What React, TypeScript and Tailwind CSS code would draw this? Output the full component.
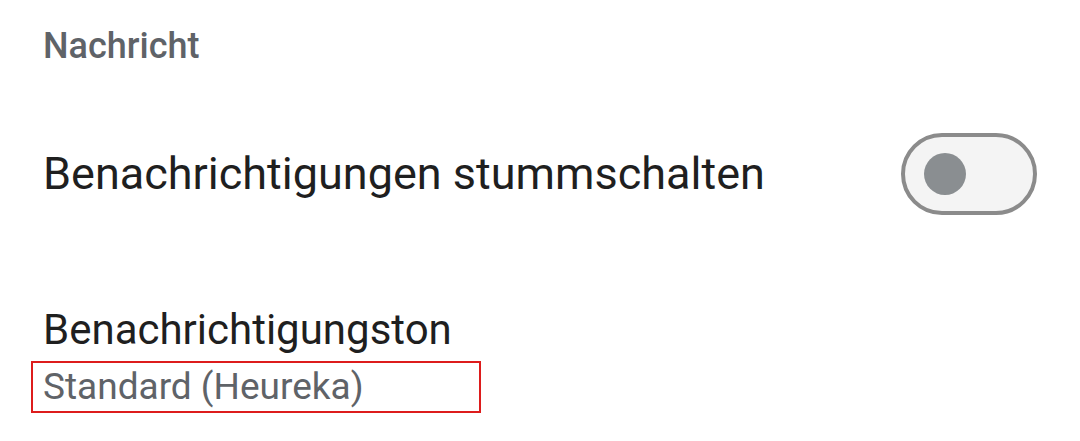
import React from 'react'

const font = { fontFamily: 'Roboto, "Noto Sans", sans-serif' }

const Toggle: React.FC = () => (
  <div className="w-[136px] h-[82px] rounded-full border-[4px] border-[#8b8b8b] bg-[#f4f4f4] flex items-center pl-[19px]">
    <div className="w-[42px] h-[42px] rounded-full bg-[#8a8e91]" />
  </div>
)

export default function App() {
  return (
    <div className="w-[1080px] h-[441px] bg-white overflow-hidden" style={font}>
      <div className="pl-[43px] pt-[24px] text-[36px] leading-[44px] font-medium text-[#5f6368]">
        Nachricht
      </div>
      <div className="flex items-center justify-between pl-[43px] pr-[43px] mt-[65px]">
        <div className="text-[45px] text-[#1f1f1f] leading-[56px]">Benachrichtigungen stummschalten</div>
        <Toggle />
      </div>
      <div className="pl-[43px] mt-[89px]">
        <div className="text-[42px] text-[#1f1f1f] leading-[52px]">Benachrichtigungston</div>
        <div className="ml-[-12px] mt-[5px] w-[450px] border-2 border-[#dd1c1c] pl-[10px] text-[37px] leading-[48px] text-[#5f6368]">
          Standard (Heureka)
        </div>
      </div>
    </div>
  )
}
